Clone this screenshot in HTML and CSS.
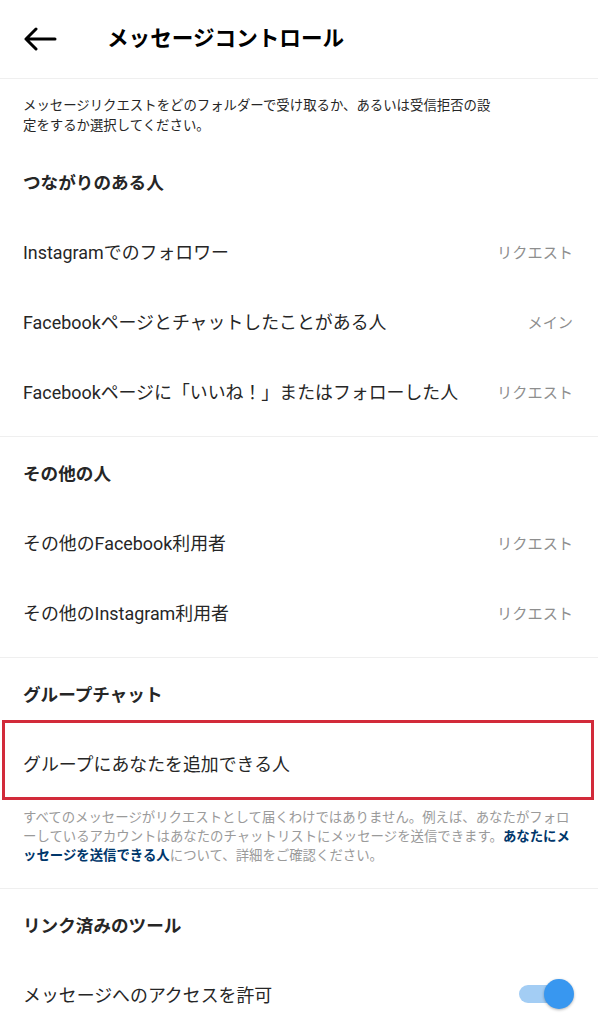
FILE: index.html
```html
<!DOCTYPE html>
<html>
<head lang="ja">
    <meta charset="UTF-8">
    <title>メッセージコントロール</title>
    <link rel="stylesheet" href="styles.css">
</head>
<body>
    <div class="header">
        <svg class="back" width="34" height="24" viewBox="0 0 34 24">
            <path d="M3 12 H32 M13 2 L3 12 L13 22" fill="none" stroke="#000" stroke-width="3" stroke-linecap="round" stroke-linejoin="round"/>
        </svg>
        <h1 class="title">メッセージコントロール</h1>
    </div>

    <p class="intro">メッセージリクエストをどのフォルダーで受け取るか、あるいは受信拒否の設<br>定をするか選択してください。</p>

    <div class="section">
        <div class="section-head">つながりのある人</div>
        <div class="row">
            <span class="label">Instagramでのフォロワー</span>
            <span class="value">リクエスト</span>
        </div>
        <div class="row">
            <span class="label">Facebookページとチャットしたことがある人</span>
            <span class="value">メイン</span>
        </div>
        <div class="row">
            <span class="label">Facebookページに「いいね！」またはフォローした人</span>
            <span class="value">リクエスト</span>
        </div>
    </div>

    <div class="section">
        <div class="section-head">その他の人</div>
        <div class="row">
            <span class="label">その他のFacebook利用者</span>
            <span class="value">リクエスト</span>
        </div>
        <div class="row">
            <span class="label">その他のInstagram利用者</span>
            <span class="value">リクエスト</span>
        </div>
    </div>

    <div class="section section-note">
        <div class="section-head">グループチャット</div>
        <div class="row highlight">
            <span class="label">グループにあなたを追加できる人</span>
        </div>
        <p class="note">すべてのメッセージがリクエストとして届くわけではありません。例えば、あなたがフォロ<br>ーしているアカウントはあなたのチャットリストにメッセージを送信できます。<a href="#">あなたにメ<br>ッセージを送信できる人</a>について、詳細をご確認ください。</p>
    </div>

    <div class="section section-last">
        <div class="section-head">リンク済みのツール</div>
        <div class="row">
            <span class="label">メッセージへのアクセスを許可</span>
            <span class="toggle"><span class="knob"></span></span>
        </div>
    </div>
</body>
</html>
```

FILE: styles.css
```css
body {
    margin: 0;
    background-color: #fff;
    color: #262626;
    font-family: Roboto, "Noto Sans CJK JP", sans-serif;
}
.header {
    height: 78px;
    display: flex;
    align-items: center;
    padding-left: 23px;
    border-bottom: 1px solid #efefef;
}
.back {
    display: block;
    margin-right: 50px;
}
.title {
    margin: 0;
    font-size: 21.6px;
    font-weight: 700;
    color: #000;
    line-height: 26px;
}
.intro {
    margin: 0;
    padding: 17px 24px 10px 23px;
    font-size: 13.4px;
    line-height: 20px;
}
.section {
    padding-bottom: 10px;
    border-bottom: 1px solid #efefef;
}
.section-note {
    padding-bottom: 23px;
}
.section-last {
    border-bottom: none;
}
.section-head {
    height: 70px;
    display: flex;
    align-items: center;
    padding: 0 24px 0 23px;
    font-size: 17.6px;
    font-weight: 700;
}
.row {
    height: 70px;
    display: flex;
    align-items: center;
    justify-content: space-between;
    padding: 0 25px 0 23px;
    font-size: 17.9px;
}
.value {
    font-size: 15.2px;
    color: #8e8e8e;
}
.highlight {
    position: relative;
}
.highlight::after {
    content: "";
    position: absolute;
    top: -8px;
    bottom: -2px;
    left: 2px;
    right: 4px;
    border: 3px solid #d22a3a;
}
.note {
    margin: 0;
    padding: 10px 24px 0 23px;
    font-size: 13.4px;
    line-height: 19px;
    color: #9a9a9a;
}
.note a {
    color: #00376b;
    font-weight: 700;
    text-decoration: none;
}
.toggle {
    position: relative;
    width: 54px;
    height: 18px;
    border-radius: 9px;
    background-color: #a3cdf4;
}
.knob {
    position: absolute;
    top: -6px;
    right: -1px;
    width: 30px;
    height: 30px;
    border-radius: 50%;
    background-color: #3897f0;
    box-shadow: 0 1px 3px rgba(0, 0, 0, 0.3);
}
```
